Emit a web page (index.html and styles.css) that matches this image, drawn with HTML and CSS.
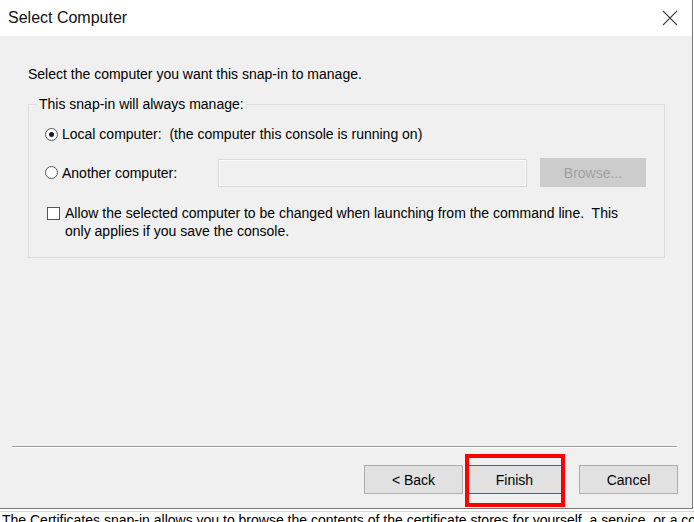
FILE: index.html
```html
<!DOCTYPE html>
<html>
<head>
<meta charset="utf-8">
<link rel="stylesheet" href="styles.css">
</head>
<body>
<div class="window">
  <div class="titlebar">
    <span class="title">Select Computer</span>
    <svg class="close" width="16" height="16" viewBox="0 0 16 16"><path d="M1 1 L15 15 M15 1 L1 15" stroke="#444" stroke-width="1.1" fill="none"/></svg>
  </div>
  <div class="content">
    <p class="intro">Select the computer you want this snap-in to manage.</p>
    <fieldset class="group">
      <legend>This snap-in will always manage:</legend>
      <div class="row radio-row first">
        <span class="radio checked"><span class="dot"></span></span>
        <span class="label">Local computer:&nbsp; (the computer this console is running on)</span>
      </div>
      <div class="row radio-row second">
        <span class="radio-cell">
          <span class="radio"></span>
          <span class="label">Another computer:</span>
        </span>
        <span class="textbox"></span>
        <span class="btn disabled">Browse...</span>
      </div>
      <div class="row check-row">
        <span class="check"></span>
        <span class="label">Allow the selected computer to be changed when launching from the command line.&nbsp; This only applies if you save the console.</span>
      </div>
    </fieldset>
    <div class="spacer"></div>
    <div class="separator"></div>
    <div class="buttons">
      <span class="btn">&lt; Back</span>
      <span class="btn focused">Finish<span class="highlight"></span></span>
      <span class="btn cancel">Cancel</span>
    </div>
  </div>
</div>
<div class="below">The Certificates snap-in allows you to browse the contents of the certificate stores for yourself, a service, or a computer.</div>
</body>
</html>
```
FILE: styles.css
```css
html, body {
  margin: 0;
  padding: 0;
  background: #ffffff;
  overflow: hidden;
  width: 694px;
  height: 522px;
}
body {
  font-family: "Liberation Sans", Arial, sans-serif;
  font-size: 14px;
  color: #000;
}
.window {
  width: 692px;
  height: 508px;
  border-right: 1px solid #7a7a7a;
  border-bottom: 1px solid #7a7a7a;
  display: flex;
  flex-direction: column;
  background: #f0f0f0;
}
.titlebar {
  height: 36px;
  background: #ffffff;
  display: flex;
  align-items: center;
  justify-content: space-between;
  padding: 0 14px 0 8px;
  flex: none;
}
.title {
  font-size: 16px;
  color: #111;
}
.close {
  display: block;
}
.content {
  flex: 1;
  display: flex;
  flex-direction: column;
}
.intro {
  margin: 30px 0 0 28px;
  line-height: 16px;
}
.group {
  margin: 14px 0 0 28px;
  width: 619px;
  border: 1px solid #dcdcdc;
  padding: 0 8px 17px 8px;
}
.group legend {
  padding: 0 2px;
  line-height: 16px;
}
.row {
  display: flex;
  align-items: center;
}
.radio-row.first {
  margin-top: 13px;
  margin-left: 8px;
  height: 18px;
}
.radio-row.second {
  margin-top: 15px;
  margin-left: 8px;
  height: 29px;
}
.radio-cell {
  display: flex;
  align-items: center;
  width: 173px;
}
.radio {
  width: 11px;
  height: 11px;
  border: 1px solid #555;
  border-radius: 50%;
  background: #fff;
  display: flex;
  align-items: center;
  justify-content: center;
  margin-right: 4px;
  flex: none;
}
.radio .dot {
  width: 5px;
  height: 5px;
  border-radius: 50%;
  background: #1a1a1a;
}
.textbox {
  width: 307px;
  height: 26px;
  border: 1px solid #dadada;
  box-shadow: inset 0 0 0 1px #fafafa;
  background: #f0f0f0;
}
.btn {
  display: flex;
  align-items: center;
  justify-content: center;
  width: 97px;
  height: 27px;
  border: 1px solid #adadad;
  background: #e1e1e1;
  position: relative;
}
.btn.disabled {
  width: 104px;
  height: 27px;
  margin-left: 13px;
  background: #cccccc;
  border-color: #cccccc;
  color: #a0a0a0;
}
.check-row {
  margin-top: 17px;
  margin-left: 10px;
  align-items: flex-start;
}
.check {
  width: 11px;
  height: 11px;
  border: 1px solid #555;
  background: #fff;
  flex: none;
  margin-top: 3px;
  margin-right: 5px;
}
.check-row .label {
  line-height: 18px;
  width: 575px;
}
.spacer {
  flex: 1;
}
.separator {
  margin: 0 15px 0 12px;
  height: 1px;
  background: #a0a0a0;
  border-bottom: 1px solid #ffffff;
}
.buttons {
  display: flex;
  justify-content: flex-end;
  padding: 17px 14px 14px 0;
  gap: 2px;
}
.btn.focused {
  border-color: #0078d7;
}
.btn.cancel {
  margin-left: 13px;
}
.highlight {
  position: absolute;
  left: -1px;
  top: -12px;
  width: 92px;
  height: 45px;
  border: 4px solid #ff0000;
}
.below {
  border-top: 1px solid #d8d8d8;
  margin-top: 2px;
  padding-left: 2px;
  width: 692px;
  overflow: hidden;
  white-space: nowrap;
  line-height: 16px;
}
```
